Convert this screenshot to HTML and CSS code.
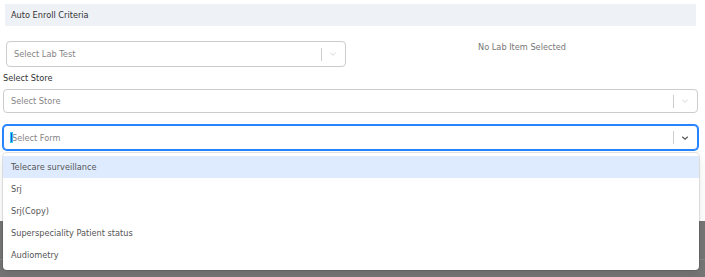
FILE: index.html
```html
<!DOCTYPE html>
<html lang="en">
<head>
  <meta charset="UTF-8" />
  <title>Auto Enroll Criteria</title>
  <link rel="stylesheet" href="styles.css">
</head>
<body>
  <div class="modal">
    <div class="section-title">Auto Enroll Criteria</div>

    <div class="lab-row">
      <div class="select lab-select">
        <span class="placeholder">Select Lab Test</span>
        <span class="separator"></span>
        <svg class="chevron" viewBox="0 0 20 20" width="10" height="10"><path d="M4.5 7.5l5.5 5 5.5-5" fill="none" stroke="currentColor" stroke-width="1.6"/></svg>
      </div>
      <div class="no-lab">No Lab Item Selected</div>
    </div>

    <div class="field-label">Select Store</div>
    <div class="select store-select">
      <span class="placeholder">Select Store</span>
      <span class="separator"></span>
      <svg class="chevron" viewBox="0 0 20 20" width="10" height="10"><path d="M4.5 7.5l5.5 5 5.5-5" fill="none" stroke="currentColor" stroke-width="1.6"/></svg>
    </div>

    <div class="select form-select focused">
      <span class="caret"></span>
      <span class="placeholder">Select Form</span>
      <span class="separator"></span>
      <svg class="chevron" viewBox="0 0 20 20" width="10" height="10"><path d="M4.5 7.5l5.5 5 5.5-5" fill="none" stroke="currentColor" stroke-width="2.4"/></svg>
    </div>

    <!-- open dropdown for Select Form -->
    <div class="menu">
      <div class="option active">Telecare surveillance</div>
      <div class="option">Srj</div>
      <div class="option">Srj(Copy)</div>
      <div class="option">Superspeciality Patient status</div>
      <div class="option">Audiometry</div>
    </div>
  </div>
  <div class="backdrop">
    <div class="backdrop-line"></div>
  </div>
</body>
</html>
```

FILE: styles.css
```css
body {
  margin: 0;
  height: 277px;
  overflow: hidden;
  background: #767676;
  font-family: 'DejaVu Sans', sans-serif;
  font-size: 8.2px;
  color: #333;
}

.modal {
  position: relative;
  background: #fff;
  height: 221px;
  padding: 4px 7px 0 3px;
  box-sizing: border-box;
}

.section-title {
  margin: 0 2px;
  height: 22px;
  line-height: 22px;
  padding-left: 6px;
  background: #eef1f6;
  color: #333;
}

.lab-row {
  display: flex;
  margin-top: 15px;
}

.select {
  display: flex;
  align-items: center;
  box-sizing: border-box;
  border: 1px solid #ccc;
  border-radius: 4px;
  background: #fff;
  padding-left: 7px;
}

.placeholder {
  flex: 1;
  color: #858585;
}

.separator {
  width: 1px;
  height: 13px;
  background: #ccc;
}

.chevron {
  color: #ccc;
  margin: 0 7px 0 6px;
}

.lab-select {
  margin-left: 3px;
  width: 340px;
  height: 26px;
}

.no-lab {
  flex: 1;
  text-align: center;
  line-height: 12px;
  color: #777;
}

.field-label {
  margin-top: 5px;
  line-height: 12px;
}

.store-select {
  margin-top: 5px;
  height: 24px;
}

.form-select {
  margin-top: 12px;
  height: 25px;
}

.focused {
  border-color: #2684ff;
  box-shadow: 0 0 0 1px #2684ff;
}

.focused .chevron {
  color: #555;
}

.caret {
  width: 1px;
  height: 9px;
  border: 1px solid #35c8f0;
  background: #1a56d8;
  margin: 0 -2px 0 0;
  position: relative;
  left: -1px;
}

.menu {
  position: absolute;
  top: 153px;
  left: 3px;
  width: 696px;
  padding: 3px 0 4px;
  background: #fff;
  border-radius: 4px;
  box-shadow: 0 0 0 1px rgba(0, 0, 0, 0.1), 0 4px 11px rgba(0, 0, 0, 0.1);
  z-index: 10;
}

.option {
  height: 22px;
  line-height: 23px;
  padding-left: 8px;
  color: #555;
}

.option.active {
  background: #deebff;
}

.backdrop {
  height: 56px;
  padding-top: 38px;
  box-sizing: border-box;
}

.backdrop-line {
  height: 1px;
  background: #858585;
}
```
